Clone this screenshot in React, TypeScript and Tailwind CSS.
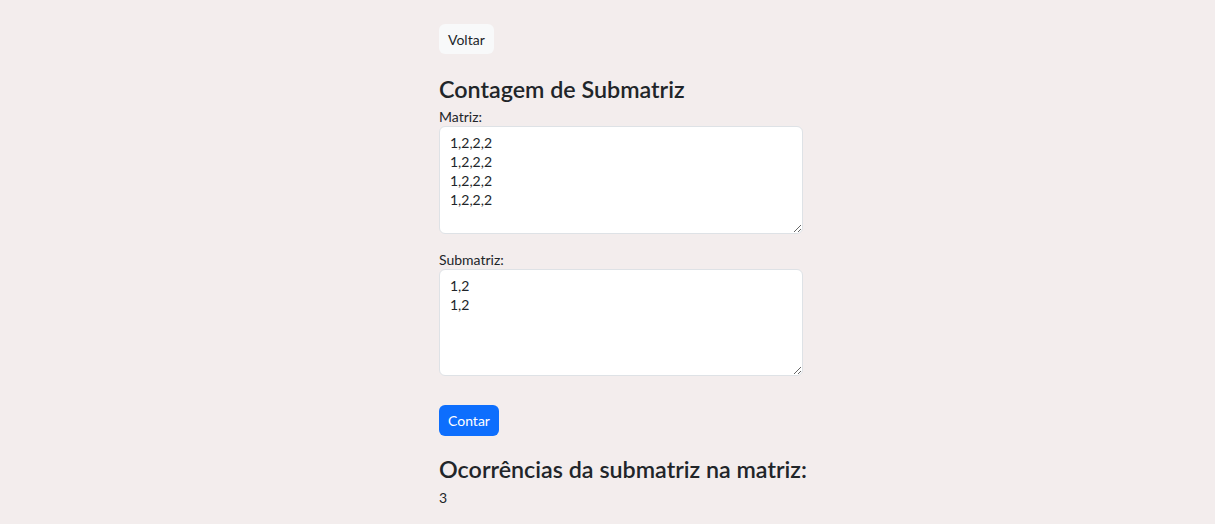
import React, { useState } from 'react';

export default function App() {
  const [matriz, setMatriz] = useState('1,2,2,2\n1,2,2,2\n1,2,2,2\n1,2,2,2');
  const [sub, setSub] = useState('1,2\n1,2');

  return (
    <div
      className="min-h-[524px] w-full bg-[#f3eded] text-[#212529]"
      style={{ fontFamily: 'Lato, "Noto Sans", sans-serif' }}
    >
      <div className="ml-[439px] w-[364px] pt-6">
        <button className="h-[30px] rounded-md bg-[#f8f9fa] px-[9px] text-[14px]">Voltar</button>

        <h2 className="mt-[20px] whitespace-nowrap text-[23.3px] font-semibold leading-[30px]">Contagem de Submatriz</h2>

        <label className="mt-[5px] block text-[14px] leading-[16px]">Matriz:</label>
        <textarea
          className="mt-[1px] block h-[108px] w-full rounded-md border border-[#dee2e6] bg-white px-[10px] py-[6px] text-[14px] leading-[19px] outline-none"
          value={matriz}
          onChange={(e) => setMatriz(e.target.value)}
        />

        <label className="mt-[18px] block text-[14px] leading-[16px]">Submatriz:</label>
        <textarea
          className="mt-[1px] block h-[107px] w-full rounded-md border border-[#dee2e6] bg-white px-[10px] py-[6px] text-[14px] leading-[19px] outline-none"
          value={sub}
          onChange={(e) => setSub(e.target.value)}
        />

        <button className="mt-[29px] h-[31px] rounded-md bg-[#0d6efd] px-[9px] text-[14px] text-white">Contar</button>

        <h2 className="mt-[18px] whitespace-nowrap text-[23.3px] font-semibold leading-[30px]">Ocorrências da submatriz na matriz:</h2>
        <p className="mt-[6px] text-[14px] leading-[16px]">3</p>
      </div>
    </div>
  );
}
